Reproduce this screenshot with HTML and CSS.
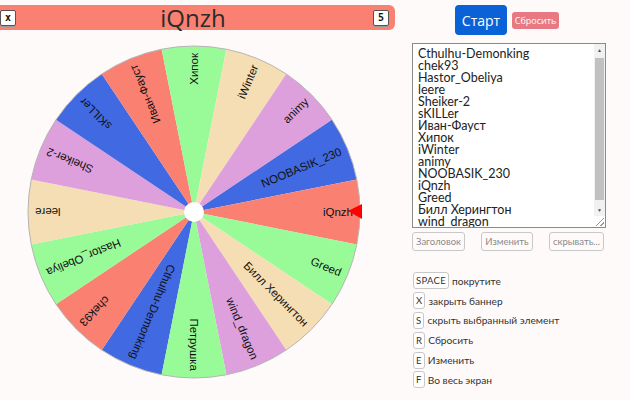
FILE: index.html
```html
<!DOCTYPE html>
<html>
<head>
	<meta charset="utf-8" />
	<title>Колесо</title>
	<link rel="stylesheet" href="styles.css">
</head>
<body>
	<div class="page">
		<div class="left">
			<div class="banner">
				<kbd class="key">x</kbd>
				<span class="winner">iQnzh</span>
				<kbd class="key">5</kbd>
			</div>
			<svg id="wheel" class="wheel" viewBox="-170 -170 340 340" width="340" height="340"></svg>
		</div>
		<div class="side">
			<div class="actions">
				<button class="btn btn-start">Старт</button>
				<button class="btn btn-reset" disabled>Сбросить</button>
			</div>
			<div class="names-box">
				<textarea id="names" class="names" spellcheck="false"></textarea>
				<div class="scroll">
					<span class="arrow">&#9650;</span>
					<span class="thumb"></span>
					<span class="arrow">&#9660;</span>
				</div>
				<span class="grip"></span>
			</div>
			<div class="tools">
				<button class="tool">Заголовок</button>
				<button class="tool">Изменить</button>
				<button class="tool">скрывать...</button>
			</div>
			<ul class="keys">
				<li><kbd>SPACE</kbd> покрутите</li>
				<li><kbd>X</kbd> закрыть баннер</li>
				<li><kbd>S</kbd> скрыть выбранный элемент</li>
				<li><kbd>R</kbd> Сбросить</li>
				<li><kbd>E</kbd> Изменить</li>
				<li><kbd>F</kbd> Во весь экран</li>
			</ul>
		</div>
	</div>

	<script type="text/javascript">
		const names = ['Cthulhu-Demonking', 'chek93', 'Hastor_Obeliya', 'leere', 'Sheiker-2', 'sKILLer',
			'Иван-Фауст', 'Хипок', 'iWinter', 'animy', 'NOOBASIK_230', 'iQnzh', 'Greed',
			'Билл Херингтон', 'wind_dragon', 'Петрушка'];
		const palette = ['#4169e1', '#fa8072', '#98fb98', '#f5deb3', '#dda0dd'];
		const winner = 11;
		const R = 166;
		const NS = 'http://www.w3.org/2000/svg';

		document.getElementById('names').value = names.join('\n');

		const wheel = document.getElementById('wheel');
		const step = 360 / names.length;

		function el(tag, attrs) {
			const e = document.createElementNS(NS, tag);
			for (const k in attrs) e.setAttribute(k, attrs[k]);
			return e;
		}

		function pt(deg) {
			const a = deg * Math.PI / 180;
			return (R * Math.cos(a)).toFixed(2) + ' ' + (R * Math.sin(a)).toFixed(2);
		}

		names.forEach(function (name, i) {
			const mid = (i - winner) * step;
			// the last slice would repeat the first colour, so it gets green
			const color = i == names.length - 1 ? palette[2] : palette[i % palette.length];
			wheel.appendChild(el('path', {
				d: 'M0 0 L' + pt(mid - step / 2) + ' A' + R + ' ' + R + ' 0 0 1 ' + pt(mid + step / 2) + ' Z',
				fill: color
			}));
			const label = el('text', {
				x: R - 7, y: 0,
				transform: 'rotate(' + mid + ')',
				'text-anchor': 'end',
				'dominant-baseline': 'central',
				'class': 'label'
			});
			label.textContent = name;
			wheel.appendChild(label);
		});

		wheel.appendChild(el('circle', { cx: 0, cy: 0, r: R, fill: 'none', stroke: '#b5b5b5', 'stroke-width': 1 }));
		wheel.appendChild(el('circle', { cx: 0, cy: 0, r: 10, fill: '#fff' }));
		wheel.appendChild(el('polygon', { points: '154,-1 168,-8 168,7', fill: '#f00' }));
	</script>
</body>
</html>
```

FILE: styles.css
```css
body {
	margin: 0;
	padding: 0;
	background: #fffafa;
	color: #333;
	font-family: Lato, "Open Sans", sans-serif;
}

.page {
	display: flex;
	align-items: flex-start;
}

.left {
	width: 395px;
}

.banner {
	display: flex;
	align-items: center;
	justify-content: space-between;
	height: 25px;
	margin-top: 5px;
	background: #fa8072;
	border-radius: 0 6px 6px 0;
	padding-right: 6px;
}

.winner {
	font-family: "Open Sans", sans-serif;
	font-size: 24px;
	line-height: 25px;
	color: #2b2b2b;
	margin-right: 3px;
}

.key {
	display: inline-block;
	width: 14px;
	height: 14px;
	line-height: 14px;
	text-align: center;
	font-family: "DejaVu Sans Mono", monospace;
	font-size: 10px;
	font-weight: bold;
	color: #111;
	background: #fff;
	border: 1px solid #555;
	border-radius: 2px;
	box-shadow: 0 1px 0 #999;
}

.wheel {
	display: block;
	margin: 12px 0 0 24px;
}

.label {
	font-family: "Liberation Sans", Arial, sans-serif;
	font-size: 11.5px;
	fill: #111;
}

.side {
	width: 194px;
	margin-left: 17px;
}

.actions {
	display: flex;
	align-items: center;
	justify-content: center;
	gap: 5px;
	padding: 5px 4px 0 0;
}

.btn {
	border: none;
	color: #fff;
	font-family: "Open Sans", sans-serif;
	padding: 0;
	border-radius: 4px;
}

.btn-start {
	width: 52px;
	height: 30px;
	font-size: 14px;
	background: #0b62d6;
}

.btn-reset {
	width: 47px;
	height: 17px;
	font-size: 9px;
	background: #dc3545;
	opacity: 0.65;
	border-radius: 3px;
}

.names-box {
	position: relative;
	margin-top: 8px;
}

.names {
	display: block;
	box-sizing: border-box;
	width: 194px;
	height: 185px;
	padding: 4px 14px 3px 5px;
	border: 1px solid #8a8a8a;
	background: #fff;
	color: #222;
	font-family: inherit;
	font-size: 12.5px;
	line-height: 12px;
	overflow: hidden;
	resize: none;
	white-space: pre;
}

/* drawn scrollbar over the list */
.scroll {
	position: absolute;
	top: 1px;
	right: 1px;
	bottom: 12px;
	width: 11px;
	display: flex;
	flex-direction: column;
	align-items: center;
	background: #f1f1f1;
}

	.scroll .arrow {
		font-size: 5px;
		line-height: 12px;
		height: 12px;
		color: #505050;
	}

	.scroll .thumb {
		width: 9px;
		height: 142px;
		margin-top: 2px;
		background: #c1c1c1;
	}

	.scroll .arrow:last-child {
		margin-top: auto;
	}

.grip {
	position: absolute;
	right: 2px;
	bottom: 2px;
	width: 8px;
	height: 8px;
	background: linear-gradient(135deg, transparent 45%, #999 45%, #999 55%, transparent 55%, transparent 75%, #999 75%, #999 85%, transparent 85%);
}

.tools {
	display: flex;
	justify-content: space-between;
	margin-top: 4px;
	padding-right: 2px;
}

.tool {
	height: 19px;
	padding: 0 3px;
	font-family: inherit;
	font-size: 9.5px;
	color: #8a8a8a;
	background: transparent;
	border: 1px solid #c8c8c8;
	border-radius: 3px;
}

.keys {
	list-style: none;
	margin: 20px 0 0;
	padding: 0 0 0 1px;
	font-size: 10.2px;
}

	.keys li {
		display: flex;
		align-items: center;
		gap: 3px;
		height: 19.8px;
	}

	.keys kbd {
		display: inline-block;
		height: 15px;
		line-height: 15px;
		padding: 0 2px;
		font-family: inherit;
		font-size: 9.5px;
		letter-spacing: 0.3px;
		color: #333;
		background: #fff;
		border: 1px solid #c8c8c8;
		border-radius: 3px;
	}
```
